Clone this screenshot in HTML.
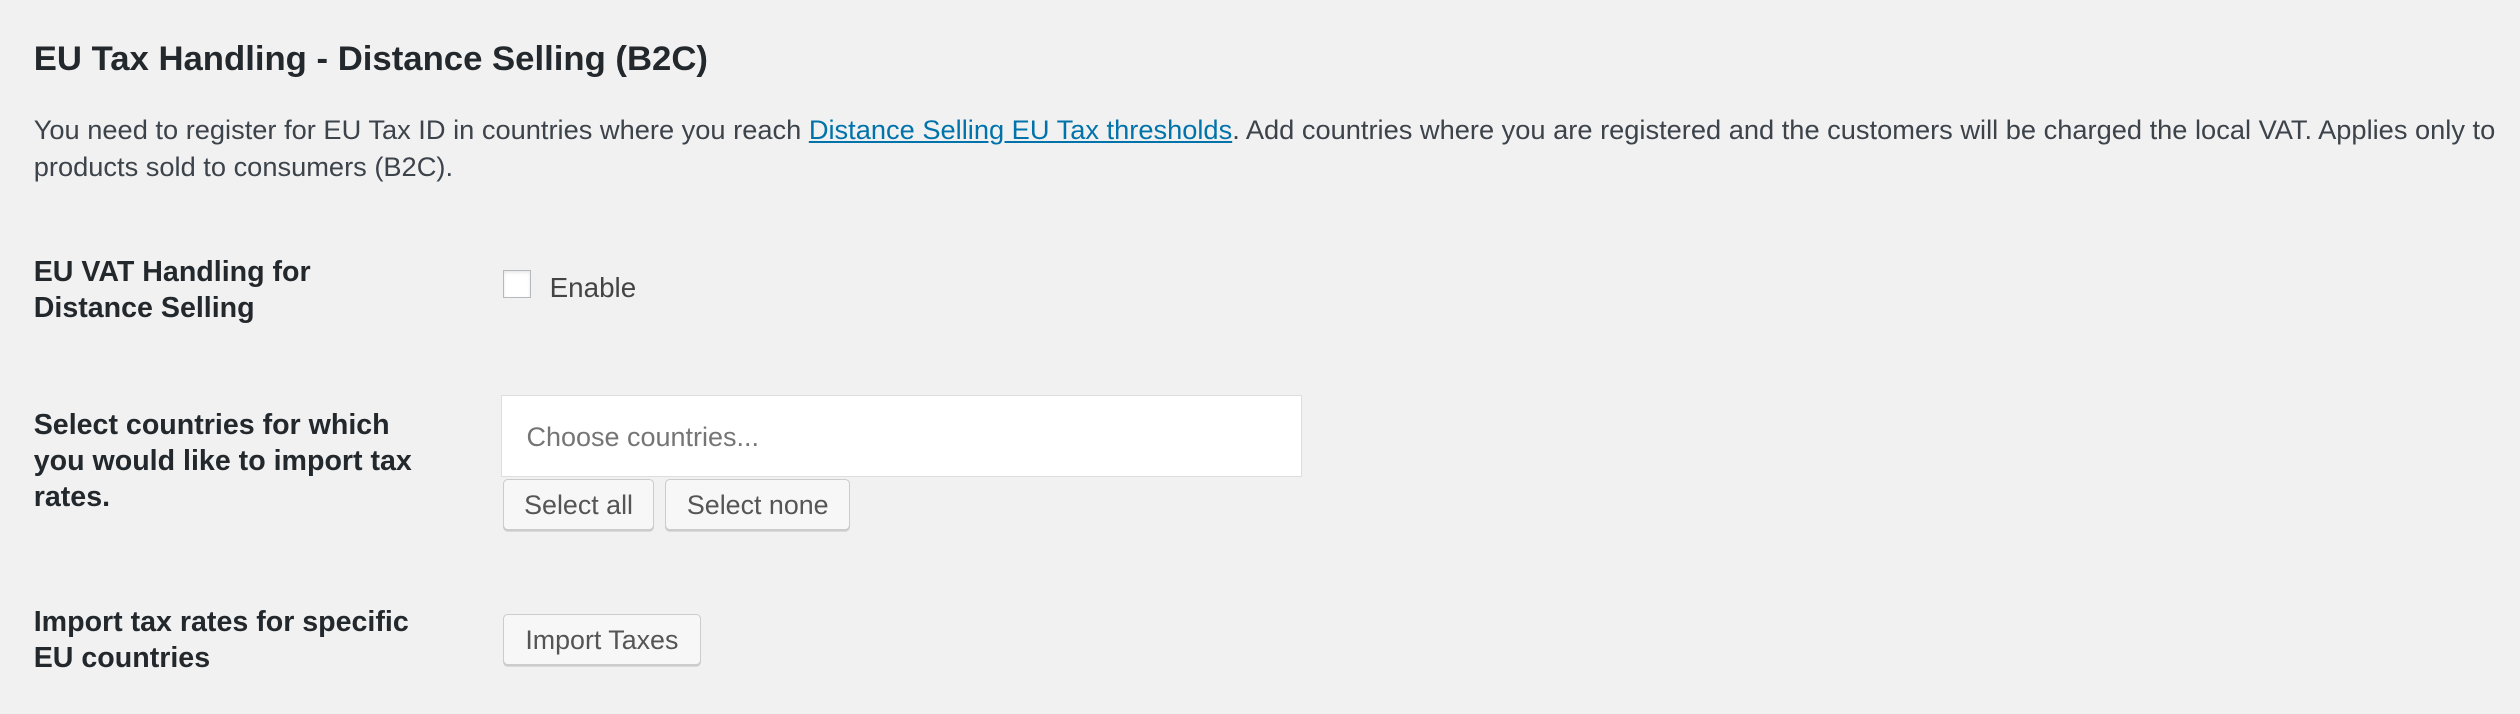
<!DOCTYPE html>
<html><head><meta charset="utf-8"><style>
html,body{margin:0;padding:0;background:#f1f1f1;}
body{width:1568px;height:444px;zoom:1.60714;position:relative;overflow:hidden;font-family:"Liberation Sans",sans-serif;color:#444;}
.a{position:absolute;white-space:nowrap;}
h2{position:absolute;left:21px;top:25px;margin:0;font-size:21.6px;font-weight:bold;color:#23282d;}
.p{left:21px;top:70px;font-size:16.95px;line-height:23px;color:#3c434a;}
.p a{color:#0073aa;text-decoration:underline;}
.l{left:21px;font-size:17.8px;line-height:22.5px;font-weight:bold;color:#23282d;}
.cb{position:absolute;left:313px;top:168px;width:16px;height:16px;border:1px solid #b4b9be;background:#fff;box-shadow:inset 0 1px 2px rgba(0,0,0,.1);}
.btn{position:absolute;height:32px;box-sizing:border-box;border:1px solid #ccc;border-radius:3px;background:#f7f7f7;box-shadow:0 1px 0 #ccc;font-size:16.7px;color:#555;line-height:32px;text-align:center;}
.in{position:absolute;left:312px;top:246px;width:498px;height:51px;box-sizing:border-box;border:1px solid #ddd;background:#fff;}
</style></head><body>
<h2>EU Tax Handling - Distance Selling (B2C)</h2>
<div class="a p">You need to register for EU Tax ID in countries where you reach <a>Distance Selling EU Tax thresholds</a>. Add countries where you are registered and the customers will be charged the local VAT. Applies only to<br>products sold to consumers (B2C).</div>
<div class="a l" style="top:158px">EU VAT Handling for<br>Distance Selling</div>
<div class="cb"></div>
<div class="a" style="left:342px;top:169px;font-size:17.3px;color:#444">Enable</div>
<div class="a l" style="top:253px">Select countries for which<br>you would like to import tax<br>rates.</div>
<div class="in"><span class="a" style="left:15px;top:16px;font-size:16.8px;color:#757575">Choose countries...</span></div>
<div class="btn" style="left:313px;top:298px;width:94px">Select all</div>
<div class="btn" style="left:414px;top:298px;width:115px">Select none</div>
<div class="a l" style="top:376px">Import tax rates for specific<br>EU countries</div>
<div class="btn" style="left:313px;top:382px;width:123px">Import Taxes</div>
</body></html>
